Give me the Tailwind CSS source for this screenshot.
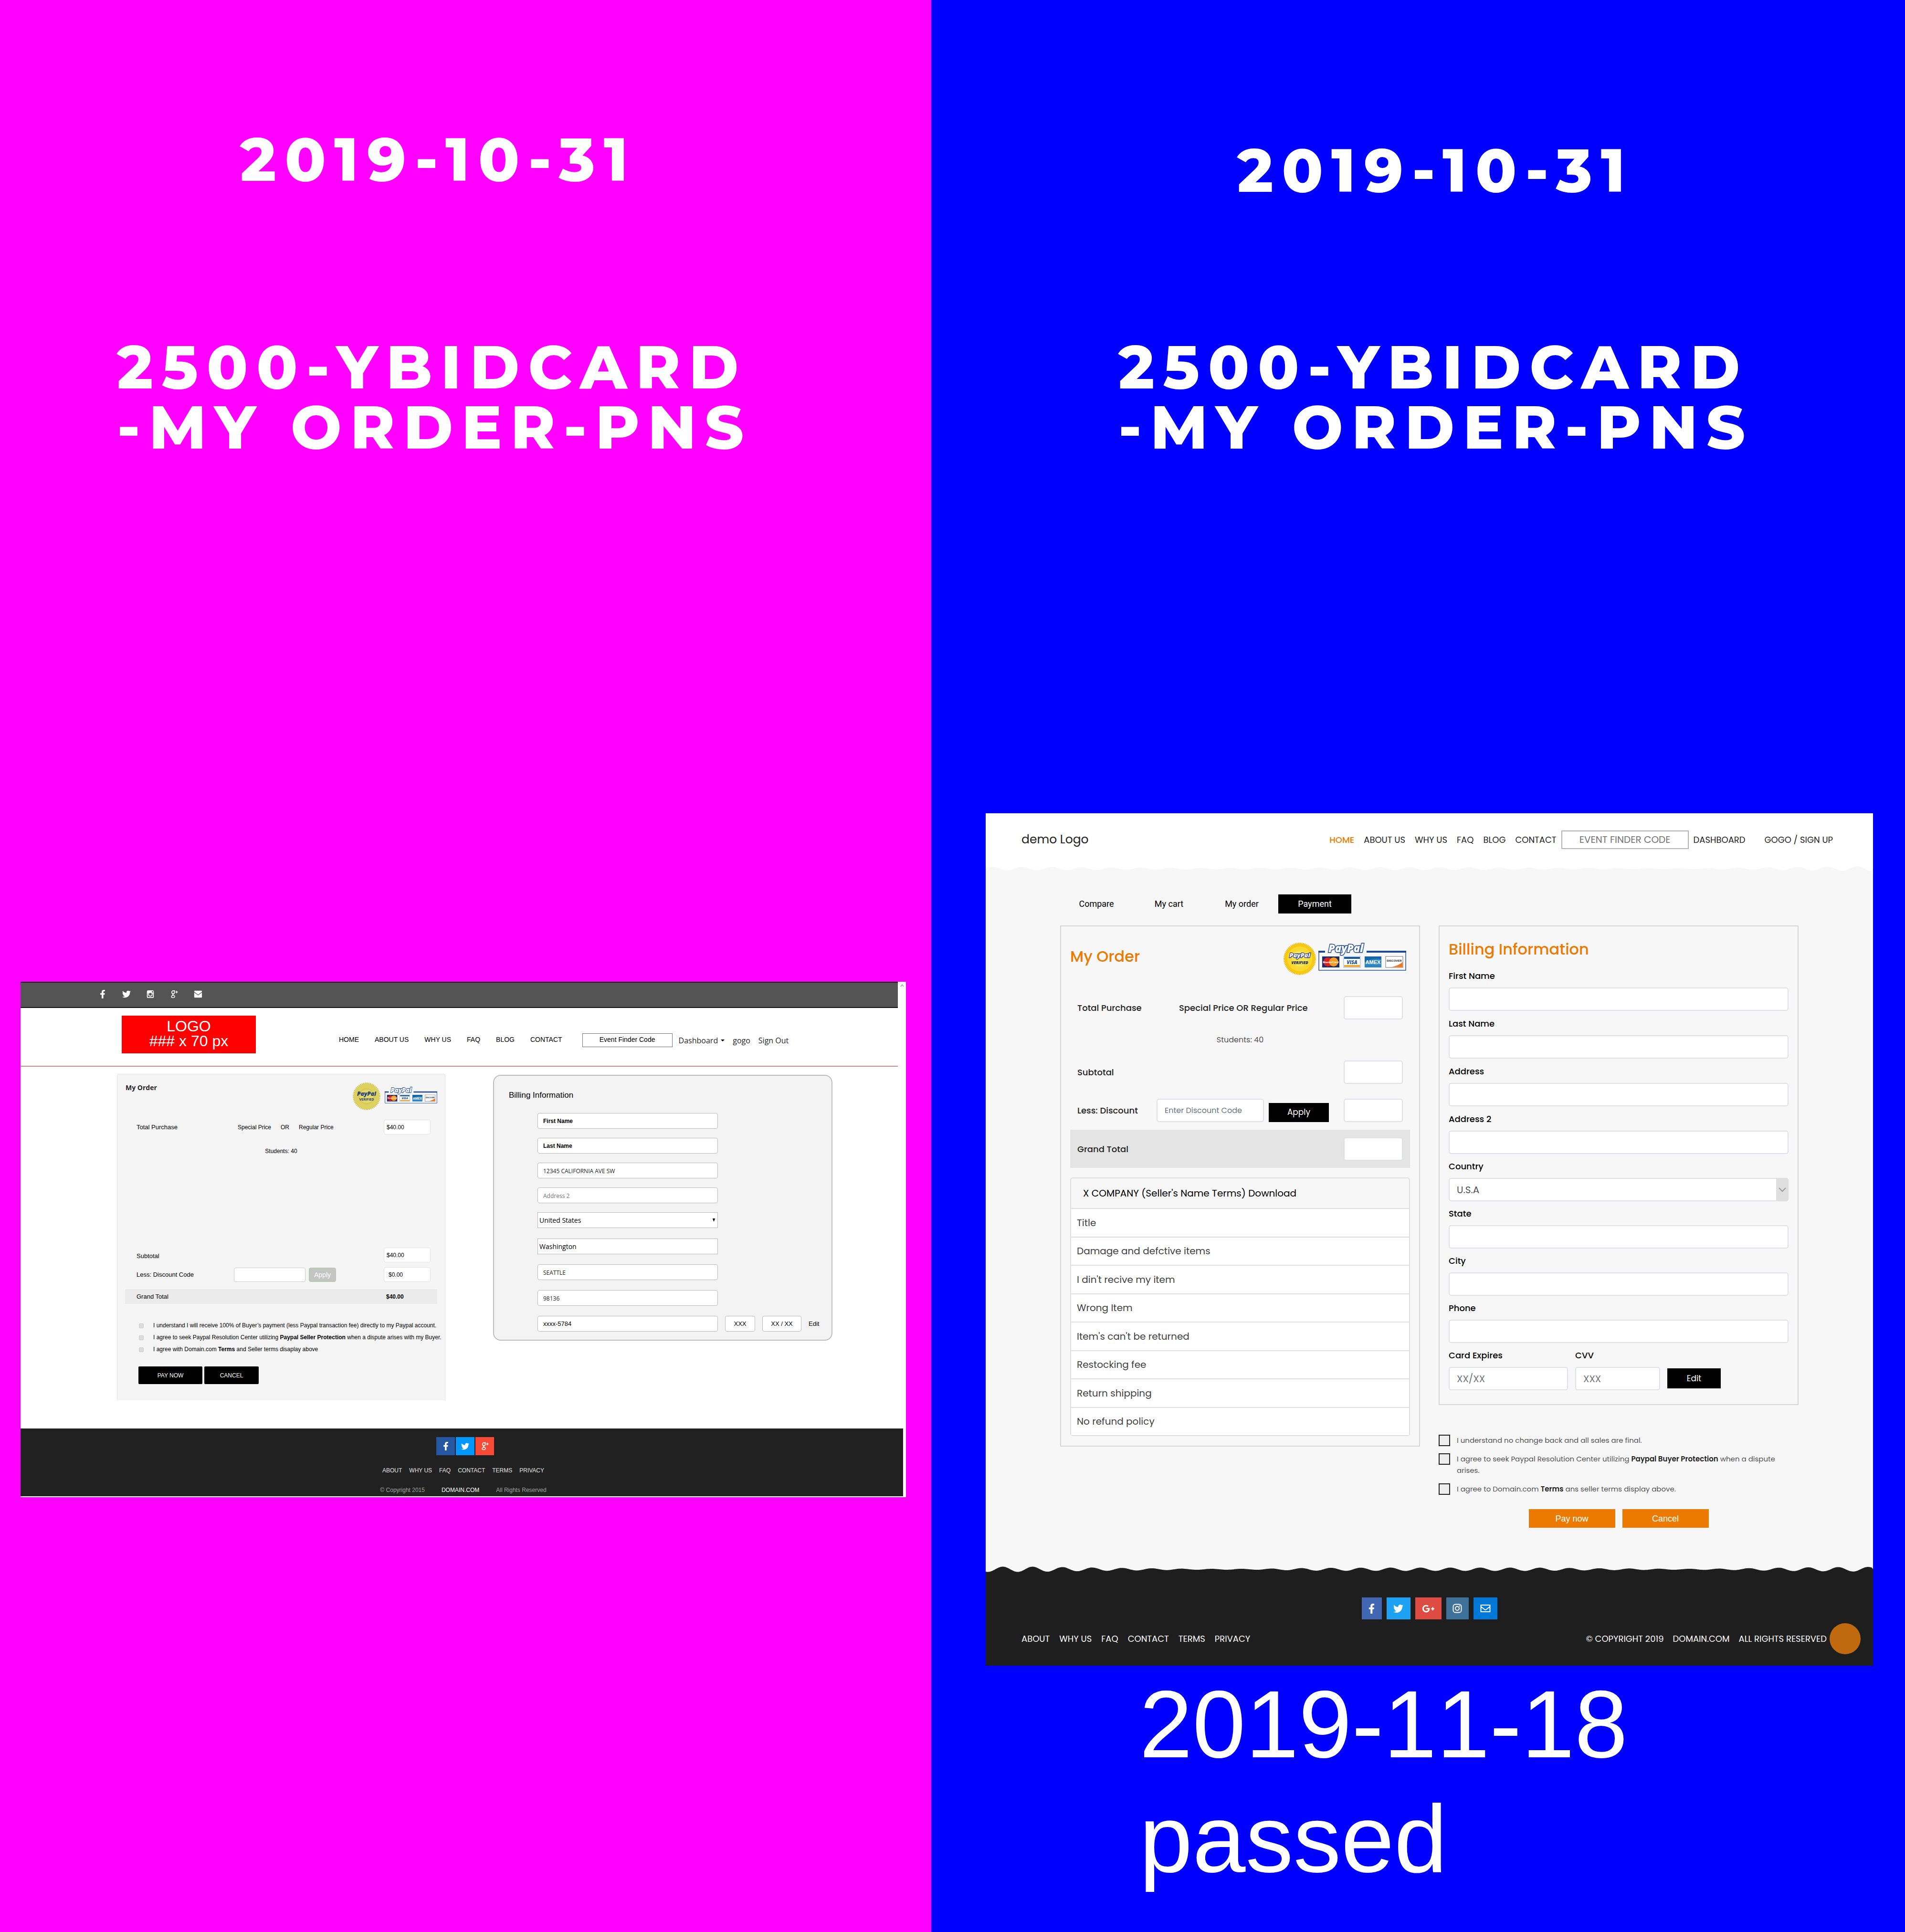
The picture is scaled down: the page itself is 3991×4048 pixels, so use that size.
<!DOCTYPE html>
<html lang="en">
<head>
<meta charset="utf-8">
<title>2500-YBIDCARD - My Order - PNS</title>
<script src="https://cdn.jsdelivr.net/npm/@tailwindcss/browser@4"></script>
</head>
<body class="bg-[#0000ff]">
<svg class="hidden" aria-hidden="true">
  <symbol id="fb" viewBox="0 0 320 512"><path fill="currentColor" d="M279.14 288l14.22-92.66h-88.91v-60.13c0-25.35 12.42-50.06 52.24-50.06h40.42V6.26S260.43 0 225.36 0c-73.22 0-121.08 44.38-121.08 124.72v70.62H22.89V288h81.39v224h100.17V288z"/></symbol>
  <symbol id="tw" viewBox="0 0 512 512"><path fill="currentColor" d="M459.37 151.716c.325 4.548.325 9.097.325 13.645 0 138.72-105.583 298.558-298.558 298.558-59.452 0-114.68-17.219-161.137-47.106 8.447.974 16.568 1.299 25.34 1.299 49.055 0 94.213-16.568 130.274-44.832-46.132-.975-84.792-31.188-98.112-72.772 6.498.974 12.995 1.624 19.818 1.624 9.421 0 18.843-1.3 27.614-3.573-48.081-9.747-84.143-51.98-84.143-102.985v-1.299c13.969 7.797 30.214 12.67 47.431 13.319-28.264-18.843-46.781-51.005-46.781-87.391 0-19.492 5.197-37.36 14.294-52.954 51.655 63.675 129.3 105.258 216.365 109.807-1.624-7.797-2.599-15.918-2.599-24.04 0-57.828 46.782-104.934 104.934-104.934 30.213 0 57.502 12.67 76.67 33.137 23.715-4.548 46.456-13.32 66.599-25.34-7.798 24.366-24.366 44.833-46.132 57.827 21.117-2.273 41.584-8.122 60.426-16.243-14.292 20.791-32.161 39.308-52.628 54.253z"/></symbol>
  <symbol id="ig-solid" viewBox="0 0 20 20"><path fill="currentColor" fill-rule="evenodd" d="M5 1h10a3 3 0 0 1 3 3v12a3 3 0 0 1-3 3H5a3 3 0 0 1-3-3V4a3 3 0 0 1 3-3zm8.500 2v3h3V3zM4 8.500V16a1 1 0 0 0 1 1h10a1 1 0 0 0 1-1V8.500h-1.500a5 5 0 1 1-9 0zM10 7a3.200 3.200 0 1 0 0 6.400A3.200 3.200 0 0 0 10 7z"/></symbol>
  <symbol id="gp-old" viewBox="0 0 20 20"><g fill="none" stroke="currentColor"><ellipse cx="7.500" cy="5.600" rx="3.200" ry="3.700" stroke-width="1.800"/><path d="M8 2h4M9 9c-3.500 0-3.500 2-1 3.200 3.500 1.600 3.500 2.400 3 4.200-1 2.600-7.500 2.600-7.500-.6 0-2.600 3-3 5-3" stroke-width="1.800"/><path d="M15.500 2v6M12.500 5h6" stroke-width="1.500"/></g></symbol>
  <symbol id="mail-solid" viewBox="0 0 20 20"><path fill="currentColor" d="M2 2h16a1 1 0 0 1 1 1v1.500L10 11 1 4.500V3a1 1 0 0 1 1-1zM1 6.200l9 6.600 9-6.600V17a1 1 0 0 1-1 1H2a1 1 0 0 1-1-1z"/></symbol>
  <symbol id="gp" viewBox="0 0 640 512"><path fill="currentColor" d="M386.061 228.496c1.834 9.692 3.143 19.384 3.143 31.956C389.204 370.205 315.599 448 204.8 448c-106.084 0-192-85.915-192-192s85.916-192 192-192c51.864 0 95.083 18.859 128.611 50.292l-52.126 50.03c-14.145-13.621-39.028-29.599-76.485-29.599-65.484 0-118.92 54.221-118.92 121.277 0 67.056 53.436 121.277 118.92 121.277 75.961 0 104.513-54.745 108.965-82.773H204.8v-66.009h181.261zm185.406 6.437V179.2h-56.001v55.733h-55.733v56.001h55.733v55.733h56.001v-55.733H627.2v-56.001h-55.733z"/></symbol>
  <symbol id="ig" viewBox="0 0 20 20"><g fill="none" stroke="currentColor" stroke-width="1.900"><rect x="1.500" y="1.500" width="17" height="17" rx="4.500"/><circle cx="10" cy="10" r="4"/></g><circle cx="15" cy="5" r="1.200" fill="currentColor"/></symbol>
  <symbol id="mail" viewBox="0 0 22 18"><path fill="none" stroke="currentColor" stroke-width="2" d="M1.500 2h19v14h-19zM2 5.500l7.500 6q1.500 1 3 0l7.500-6"/></symbol>
  <symbol id="cards" viewBox="0 -10 184 70">
    <path d="M1 10v39h182V10" fill="none" stroke="#2b5797" stroke-width="1.500"/>
    <path d="M0 8h14v4H0zM101 8h83v4h-83z" fill="#1f4a8f"/>
    <text x="21" y="11" font-family="Open Sans, sans-serif" font-weight="800" font-style="italic" font-size="22" fill="#fff" stroke="#1f4a8f" stroke-width="3" paint-order="stroke">PayPal</text>
    <rect x="8" y="20" width="36" height="23" fill="#1c2b6b"/><circle cx="20" cy="31.500" r="9.500" fill="#d9201c"/><circle cx="32" cy="31.500" r="9.500" fill="#f79b1c"/>
    <text x="26" y="34" text-anchor="middle" font-family="Liberation Sans, sans-serif" font-weight="700" font-size="6" fill="#fff">MasterCard</text>
    <rect x="53" y="20" width="35" height="23" fill="#fff" stroke="#8fb2d8" stroke-width="1"/><path d="M54 21h33v4H54z" fill="#14539a"/><path d="M54 38h33v4H54z" fill="#f4a62a"/>
    <text x="70.500" y="35.500" text-anchor="middle" font-family="Open Sans, sans-serif" font-weight="800" font-style="italic" font-size="10" fill="#14539a">VISA</text>
    <rect x="97" y="20" width="35" height="23" fill="#2c86c6"/><path d="M97 20h35v6q-18-4-35 6z" fill="#1566a8"/>
    <text x="114.500" y="36" text-anchor="middle" font-family="Liberation Sans, sans-serif" font-weight="700" font-size="11" fill="#fff">AMEX</text>
    <rect x="141" y="20" width="36" height="23" fill="#fff" stroke="#777" stroke-width="1"/><path d="M152 42.500q16-3 24.500-11v11z" fill="#ee7a22"/>
    <text x="159" y="31" text-anchor="middle" font-family="Liberation Sans, sans-serif" font-weight="700" font-size="6" fill="#222">DISCOVER</text>
  </symbol>
</svg>

<main class="grid min-h-screen grid-cols-[1951fr_2040fr] text-black">

<!-- Previous design -->
<section class="bg-[#ff00ff] pt-[271px]">
  <header class="font-['Montserrat','Inter',sans-serif] text-[126px] leading-[126px] font-extrabold tracking-[18px] text-white">
    <p class="pl-[503px]">2019-10-31</p>
    <h1 class="mt-[309px] pl-[245px]">2500-YBIDCARD<br>-MY ORDER-PNS</h1>
  </header>

  <article class="mt-[1099px] mr-[53px] ml-[43px] bg-white pb-[2px] font-['Liberation_Sans',Arial,sans-serif]">
    <div class="flex">
      <div class="flex h-[55px] flex-1 items-center gap-[30px] border-y-2 border-[#161616] bg-[#545454] pb-1 pl-[162px] text-white">
        <a href="#" aria-label="Facebook"><svg class="h-[18px] w-5"><use href="#fb"/></svg></a>
        <a href="#" aria-label="Twitter"><svg class="h-[18px] w-5"><use href="#tw"/></svg></a>
        <a href="#" aria-label="Instagram"><svg class="h-[18px] w-5"><use href="#ig-solid"/></svg></a>
        <a href="#" aria-label="Google Plus"><svg class="h-[18px] w-5"><use href="#gp-old"/></svg></a>
        <a href="#" aria-label="Mail"><svg class="h-[18px] w-5"><use href="#mail-solid"/></svg></a>
      </div>
      <svg class="h-[18px] w-[17px] text-gray-400" viewBox="0 0 17 18"><path d="M6 10l3-4 3 4" fill="none" stroke="currentColor" stroke-width="1.500"/></svg>
    </div>

    <div class="mr-[17px] flex h-[123px] items-start border-b-2 border-[#c98c8c] pt-4 pl-[212px] text-sm">
      <div class="h-[79px] w-[281px] bg-[#ff0000] pt-[7px] text-center text-[32px] leading-[31px] text-white">LOGO<br>### x 70 px</div>
      <nav class="mt-[35px] ml-[174px] flex h-[30px] items-center gap-[33px]">
        <a href="#">HOME</a><a href="#">ABOUT US</a><a href="#">WHY US</a><a href="#">FAQ</a><a href="#">BLOG</a><a href="#">CONTACT</a>
      </nav>
      <input aria-label="Event Finder Code" placeholder="Event Finder Code" class="mt-[37px] ml-[42px] h-[29px] w-[189px] border border-neutral-500 pb-[3px] text-center text-sm placeholder:text-black">
      <nav class="mt-[37px] ml-[13px] flex h-[30px] items-center gap-[17px] font-['Open_Sans',sans-serif] text-base text-neutral-800">
        <a href="#" class="flex items-center gap-[6px]">Dashboard<svg class="size-2" viewBox="0 0 8 8"><path d="M0 2h8L4 6z"/></svg></a><a href="#">gogo</a><a href="#">Sign Out</a>
      </nav>
    </div>

    <div class="grid grid-cols-[688fr_711fr] items-start gap-[100px] pt-[15px] pr-[154px] pb-[59px] pl-[202px]">
      <form class="rounded-t-[4px] border border-b-0 border-[#e3e3e3] bg-[#f5f5f5] pb-[34px] text-[13px]">
        <div class="flex justify-between pt-4 pr-4 pl-[17px]">
          <h2 class="font-['Open_Sans',sans-serif] text-sm leading-6 font-bold text-neutral-800">My Order</h2>
          <div class="flex items-center gap-[8px]">
            <svg class="size-[60px]" viewBox="0 0 60 60"><circle cx="30" cy="30" r="27" fill="#ddd160"/><circle cx="30" cy="30" r="27.500" fill="none" stroke="#d3c552" stroke-width="3" stroke-dasharray="2 1.600"/><circle cx="30" cy="30" r="17" fill="#d6ca58"/><circle cx="30" cy="30" r="14" fill="#e2d86c"/><text x="30" y="29" text-anchor="middle" font-family="Open Sans, sans-serif" font-weight="800" font-style="italic" font-size="12" fill="#1f3a78">PayPal</text><text x="30" y="39" text-anchor="middle" font-family="Open Sans, sans-serif" font-weight="700" font-size="7" fill="#28406f">VERIFIED</text></svg>
            <svg class="h-[42px] w-[110px]"><use href="#cards"/></svg>
          </div>
        </div>
        <div class="mt-[19px] grid h-[31px] grid-cols-[204px_1fr_98px] items-center pr-[30px] pl-10">
          <label for="l-total">Total Purchase</label>
          <div class="flex gap-5 pl-2 text-xs"><span>Special Price</span><span>OR</span><span>Regular Price</span></div>
          <input id="l-total" value="$40.00" class="h-[31px] w-full rounded-[4px] border border-[#e3e3e3] bg-white pl-[5px] text-xs">
        </div>
        <p class="mt-[25px] text-center text-xs leading-5">Students: 40</p>
        <div class="mt-[192px] grid h-[31px] grid-cols-[204px_1fr_98px] items-center pr-[30px] pl-10">
          <label for="l-sub" class="col-span-2 pt-1">Subtotal</label>
          <input id="l-sub" value="$40.00" class="h-[31px] w-full rounded-[4px] border border-[#e3e3e3] bg-white pl-[5px] text-xs">
        </div>
        <div class="mt-[10px] grid h-[31px] grid-cols-[204px_1fr_98px] items-center pr-[30px] pl-10">
          <label for="l-code">Less: Discount Code</label>
          <div class="flex gap-[7px]">
            <input id="l-code" class="h-[30px] w-[150px] rounded-[4px] border border-[#ccc] bg-white">
            <button type="button" class="h-[30px] w-[57px] rounded-[4px] border border-[#a9d39a] bg-[#c4c4c4] text-sm text-white">Apply</button>
          </div>
          <input aria-label="Discount" value="$0.00" class="h-[31px] w-full rounded-[4px] border border-[#e3e3e3] bg-white pl-[9px] text-xs">
        </div>
        <div class="mx-[16px] mt-[15px] grid h-[31px] grid-cols-[1fr_107px] items-center bg-[#ebebeb] pl-6">
          <span>Grand Total</span><strong class="text-xs">$40.00</strong>
        </div>
        <div class="mt-[33px] pl-[45px] text-xs leading-[25px]">
          <label class="flex items-center gap-5 whitespace-nowrap"><input type="checkbox" class="size-[10px] appearance-none rounded-[2px] border border-[#ccc] bg-[#dcdcdc]"><span>I understand I will receive 100% of Buyer’s payment (less Paypal transaction fee) directly to my Paypal account.</span></label>
          <label class="flex items-center gap-5 whitespace-nowrap"><input type="checkbox" class="size-[10px] appearance-none rounded-[2px] border border-[#ccc] bg-[#dcdcdc]"><span>I agree to seek Paypal Resolution Center utilizing <b>Paypal Seller Protection</b> when a dispute arises with my Buyer.</span></label>
          <label class="flex items-center gap-5 whitespace-nowrap"><input type="checkbox" class="size-[10px] appearance-none rounded-[2px] border border-[#ccc] bg-[#dcdcdc]"><span>I agree with Domain.com <b>Terms</b> and Seller terms disaplay above</span></label>
        </div>
        <div class="mt-[23px] flex gap-[4px] pl-11 text-xs text-white">
          <button type="button" class="h-[37px] w-[134px] rounded-[2px] bg-black">PAY NOW</button>
          <button type="button" class="h-[37px] w-[114px] rounded-[2px] bg-black">CANCEL</button>
        </div>
      </form>

      <form class="mt-[2px] rounded-[16px] border-2 border-[#bdbdbd] bg-[#f3f3f3] pt-[29px] pb-[17px] font-['Open_Sans',sans-serif] text-xs text-neutral-800">
        <h2 class="pl-[31px] font-['Liberation_Sans',Arial,sans-serif] text-[17px] leading-6 text-black">Billing Information</h2>
        <div class="mt-[25px] flex flex-col gap-[19px] pl-[91px]">
          <input aria-label="First Name" placeholder="First Name" class="h-[33px] w-[378px] rounded-[4px] border border-[#bbb] bg-white px-[11px] font-['Liberation_Sans',Arial,sans-serif] font-bold placeholder:text-black">
          <input aria-label="Last Name" placeholder="Last Name" class="h-[33px] w-[378px] rounded-[4px] border border-[#bbb] bg-white px-[11px] font-['Liberation_Sans',Arial,sans-serif] font-bold placeholder:text-black">
          <input aria-label="Address" value="12345 CALIFORNIA AVE SW" class="h-[33px] w-[378px] rounded-[4px] border border-[#bbb] bg-white px-[11px] pt-[2px]">
          <input aria-label="Address 2" placeholder="Address 2" class="h-[33px] w-[378px] rounded-[4px] border border-[#bbb] bg-white px-[11px] pt-[2px] placeholder:text-neutral-500">
          <div class="relative w-[378px]">
            <select aria-label="Country" class="h-[33px] w-full appearance-none border border-[#bbb] bg-white px-[3px] text-sm text-black"><option>United States</option></select>
            <svg class="pointer-events-none absolute top-[13px] right-[5px] size-[7px]" viewBox="0 0 8 8"><path d="M1 0h6L4 8z"/></svg>
          </div>
        </div>
        <div class="mt-[22px] flex flex-col gap-[21px] pl-[91px]">
          <select aria-label="State" class="h-[33px] w-[378px] appearance-none border border-[#bbb] bg-white px-[3px] text-sm text-black"><option>Washington</option></select>
          <input aria-label="City" value="SEATTLE" class="h-[33px] w-[378px] rounded-[4px] border border-[#bbb] bg-white px-[11px] pt-[2px]">
          <input aria-label="Zip" value="98136" class="h-[33px] w-[378px] rounded-[4px] border border-[#bbb] bg-white px-[11px] pt-[2px]">
          <div class="flex items-center gap-[15px] font-['Liberation_Sans',Arial,sans-serif] text-[13px] text-black">
            <input aria-label="Card" value="xxxx-5784" class="h-[33px] w-[378px] rounded-[4px] border border-[#bbb] bg-white px-[11px]">
            <input aria-label="CVV" value="XXX" class="h-[33px] w-[63px] rounded-[4px] border border-[#bbb] bg-white text-center">
            <input aria-label="Expiry" value="XX / XX" class="h-[33px] w-[82px] rounded-[4px] border border-[#bbb] bg-white text-center">
            <button type="button">Edit</button>
          </div>
        </div>
      </form>
    </div>

    <footer class="mr-[6px] flex flex-col items-center bg-[#212121] pt-[18px] pb-[5px] pl-[6px] text-xs leading-4 text-neutral-200">
      <div class="flex gap-[2px] pl-2 text-white">
        <a href="#" aria-label="Facebook" class="flex h-[38px] w-[39px] items-center justify-center bg-[#2558a0]"><svg class="size-[18px]"><use href="#fb"/></svg></a>
        <a href="#" aria-label="Twitter" class="flex h-[38px] w-[39px] items-center justify-center bg-[#0098ff]"><svg class="size-[17px]"><use href="#tw"/></svg></a>
        <a href="#" aria-label="Google Plus" class="flex h-[38px] w-[39px] items-center justify-center bg-[#f84b37]"><svg class="size-[18px]"><use href="#gp-old"/></svg></a>
      </div>
      <nav class="mt-6 flex gap-[15px]"><a href="#">ABOUT</a><a href="#">WHY US</a><a href="#">FAQ</a><a href="#">CONTACT</a><a href="#">TERMS</a><a href="#">PRIVACY</a></nav>
      <p class="mt-[25px] flex gap-[35px] text-neutral-400"><span>© Copyright 2015</span><a href="#" class="text-white">DOMAIN.COM</a><span>All Rights Reserved</span></p>
    </footer>
  </article>
</section>

<!-- New design -->
<section class="bg-[#0000ff] pt-[294px]">
  <header class="font-['Montserrat','Inter',sans-serif] text-[126px] leading-[126px] font-extrabold tracking-[18px] text-white">
    <p class="pl-[641px]">2019-10-31</p>
    <h1 class="mt-[286px] pl-[392px]">2500-YBIDCARD<br>-MY ORDER-PNS</h1>
  </header>

  <article class="mt-[746px] mr-[67px] ml-[114px] bg-[#f7f7f7] font-['Poppins','Inter',sans-serif] text-[18px] text-[#222]">
    <div class="flex h-[110px] items-center bg-white pr-[84px] pl-[75px]">
      <a href="#" class="mr-auto text-[25px]">demo Logo</a>
      <nav class="flex items-center gap-5">
        <a href="#" class="font-medium text-[#ed7a00]">HOME</a><a href="#">ABOUT US</a><a href="#">WHY US</a><a href="#">FAQ</a><a href="#">BLOG</a><a href="#">CONTACT</a>
      </nav>
      <input aria-label="Event finder code" placeholder="EVENT FINDER CODE" class="mx-[10px] h-[39px] w-[267px] border-2 border-[#b4b4b4] text-center text-xl placeholder:text-neutral-500">
      <nav class="flex gap-10"><a href="#">DASHBOARD</a><a href="#">GOGO / SIGN UP</a></nav>
    </div>
    <svg class="block h-3 w-full bg-white" viewBox="0 0 1859 12" preserveAspectRatio="none"><path data-wave="0:4,200:3,450:1.5,620:1.5,800:3,1000:3,1200:1.7,1360:1,1500:1,1650:3,1859:5.5" data-mid="6" data-base="12" data-period="62.500" data-phase="-2.900" fill="#f7f7f7"/></svg>

    <div class="px-[156px]">
      <nav class="flex pt-12 font-['Roboto',sans-serif] text-lg text-black">
        <a href="#" class="flex h-10 w-[152px] items-center justify-center">Compare</a>
        <a href="#" class="flex h-10 w-[152px] items-center justify-center">My cart</a>
        <a href="#" class="flex h-10 w-[153px] items-center justify-center">My order</a>
        <a href="#" class="flex h-10 w-[153px] items-center justify-center bg-black text-white">Payment</a>
      </nav>

      <div class="mt-[25px] grid grid-cols-2 items-start gap-[39px]">
        <form class="border-2 border-[#d6d6d6] px-[19px] pb-5 font-medium">
          <div class="flex items-start justify-between pt-[33px] pr-2">
            <h2 class="text-[32px] leading-[60px] font-medium text-[#ed7a00]">My Order</h2>
            <div class="flex items-center gap-[4px]">
              <svg class="size-[70px]" viewBox="0 0 70 70"><circle cx="35" cy="35" r="32" fill="#f6c913"/><circle cx="35" cy="35" r="32.500" fill="none" stroke="#f2bb0c" stroke-width="3" stroke-dasharray="2 1.400"/><circle cx="35" cy="35" r="26" fill="#fbd92c"/><circle cx="35" cy="35" r="20" fill="#f5dc3e"/><circle cx="35" cy="35" r="16" fill="#fae552"/><text x="35" y="32" text-anchor="middle" font-family="Open Sans, sans-serif" font-weight="800" font-style="italic" font-size="13" fill="#fff" stroke="#1d2f8a" stroke-width="2.500" paint-order="stroke">PayPal</text><text x="35" y="46" text-anchor="middle" font-family="Open Sans, sans-serif" font-weight="800" font-style="italic" font-size="8" fill="#1c2a50">VERIFIED</text></svg>
              <svg class="h-[70px] w-[184px]"><use href="#cards"/></svg>
            </div>
          </div>
          <div class="mt-[42px] grid h-[50px] grid-cols-[166px_1fr_124px] items-center px-[15px]">
            <label for="r-total">Total Purchase</label><span class="pl-[47px]">Special Price OR Regular Price</span>
            <input id="r-total" class="h-[49px] w-full rounded-[5px] border-2 border-[#dee2e6] bg-white">
          </div>
          <p class="mt-[31px] text-center text-base leading-6 font-normal text-neutral-600">Students: 40</p>
          <div class="mt-[31px] grid h-[49px] grid-cols-[166px_1fr_124px] items-center px-[15px]">
            <label for="r-sub" class="col-span-2">Subtotal</label>
            <input id="r-sub" class="h-[49px] w-full rounded-[5px] border-2 border-[#dee2e6] bg-white">
          </div>
          <div class="mt-[31px] grid h-[49px] grid-cols-[166px_1fr_124px] items-center px-[15px]">
            <label for="r-code">Less: Discount</label>
            <div class="flex items-end gap-[10px]">
              <input id="r-code" placeholder="Enter Discount Code" class="h-[49px] w-[225px] rounded-[5px] border-2 border-[#dee2e6] bg-white pl-[15px] text-base font-normal placeholder:text-[#6c757d]">
              <button type="button" class="h-10 w-[126px] bg-black text-[17px] font-normal text-white">Apply</button>
            </div>
            <input aria-label="Discount" class="h-[49px] w-full rounded-[5px] border-2 border-[#dee2e6] bg-white">
          </div>
          <div class="mt-4 grid h-20 grid-cols-[1fr_124px] items-center bg-[#e4e4e4] px-[15px]">
            <label for="r-grand">Grand Total</label>
            <input id="r-grand" class="h-[49px] w-full rounded-[5px] border-2 border-[#dee2e6] bg-white">
          </div>
          <div class="mt-5 rounded-[5px] border-2 border-[#dfdfdf] text-xl font-normal">
            <h3 class="h-[62px] pl-[25px] leading-[62px] text-black">X COMPANY (Seller's Name Terms) Download</h3>
            <ul class="grid h-[476px] auto-rows-fr text-neutral-700">
              <li class="flex items-center border-t-2 border-[#dfdfdf] bg-white pl-3">Title</li>
              <li class="flex items-center border-t-2 border-[#dfdfdf] bg-white pl-3">Damage and defctive items</li>
              <li class="flex items-center border-t-2 border-[#dfdfdf] bg-white pl-3">I din't recive my item</li>
              <li class="flex items-center border-t-2 border-[#dfdfdf] bg-white pl-3">Wrong Item</li>
              <li class="flex items-center border-t-2 border-[#dfdfdf] bg-white pl-3">Item's can't be returned</li>
              <li class="flex items-center border-t-2 border-[#dfdfdf] bg-white pl-3">Restocking fee</li>
              <li class="flex items-center border-t-2 border-[#dfdfdf] bg-white pl-3">Return shipping</li>
              <li class="flex items-center border-t-2 border-[#dfdfdf] bg-white pl-3">No refund policy</li>
            </ul>
          </div>
        </form>

        <form>
          <div class="border-2 border-[#d6d6d6] px-[19px] pt-6 pb-[29px] leading-6 font-medium text-black">
            <h2 class="text-[32px] leading-[48px] font-medium text-[#ed7a00]">Billing Information</h2>
            <div class="mt-5 flex flex-col gap-[15px]">
              <label>First Name<input class="mt-3 block h-[49px] w-full rounded-[5px] border-2 border-[#dee2e6] bg-white"></label>
              <label>Last Name<input class="mt-3 block h-[49px] w-full rounded-[5px] border-2 border-[#dee2e6] bg-white"></label>
              <label>Address<input class="mt-3 block h-[49px] w-full rounded-[5px] border-2 border-[#dee2e6] bg-white"></label>
              <label>Address 2<input class="mt-3 block h-[49px] w-full rounded-[5px] border-2 border-[#dee2e6] bg-white"></label>
            </div>
            <div class="mt-[14px] flex flex-col gap-[14px]">
              <label class="relative">Country
                <select class="mt-3 block h-[49px] w-full appearance-none rounded-[5px] border-2 border-[#dee2e6] bg-white pl-[15px] text-xl leading-6 font-normal text-neutral-600"><option>U.S.A</option></select>
                <span class="pointer-events-none absolute right-0 bottom-0 flex h-[49px] w-[26px] items-center justify-center rounded-r-[5px] bg-[#dfdfdf]"><svg class="h-[10px] w-4" viewBox="0 0 16 10"><path d="M1 1l7 7 7-7" fill="none" stroke="#999" stroke-width="2"/></svg></span>
              </label>
              <label>State<input class="mt-3 block h-[49px] w-full rounded-[5px] border-2 border-[#dee2e6] bg-white"></label>
              <label>City<input class="mt-3 block h-[49px] w-full rounded-[5px] border-2 border-[#dee2e6] bg-white"></label>
              <label>Phone<input class="mt-3 block h-[49px] w-full rounded-[5px] border-2 border-[#dee2e6] bg-white"></label>
              <div class="flex items-end gap-[15px]">
                <label>Card Expires<input placeholder="XX/XX" class="mt-3 block h-[49px] w-[250px] rounded-[5px] border-2 border-[#dee2e6] bg-white pl-[15px] text-xl leading-6 font-normal placeholder:text-[#6c757d]"></label>
                <label>CVV<input placeholder="XXX" class="mt-3 block h-[49px] w-[178px] rounded-[5px] border-2 border-[#dee2e6] bg-white pl-[15px] text-xl leading-6 font-normal placeholder:text-[#6c757d]"></label>
                <button type="button" class="mb-1 h-[42px] w-[112px] bg-black text-[17px] font-normal text-white">Edit</button>
              </div>
            </div>
          </div>
          <div class="mt-[62px] flex flex-col gap-[15px] text-[15px] leading-6 text-neutral-600">
            <label class="flex gap-[14px]"><input type="checkbox" class="size-6 shrink-0 appearance-none border-2 border-[#222] bg-[#eee]"><span>I understand no change back and all sales are final.</span></label>
            <label class="flex gap-[14px]"><input type="checkbox" class="size-6 shrink-0 appearance-none border-2 border-[#222] bg-[#eee]"><span>I agree to seek Paypal Resolution Center utilizing <b class="font-semibold text-[#222]">Paypal Buyer Protection</b> when a dispute<br>arises.</span></label>
            <label class="flex gap-[14px]"><input type="checkbox" class="size-6 shrink-0 appearance-none border-2 border-[#222] bg-[#eee]"><span>I agree to Domain.com <b class="font-semibold text-[#222]">Terms</b> ans seller terms display above.</span></label>
          </div>
          <div class="mt-[30px] flex justify-center gap-[15px] font-['Liberation_Sans',Arial,sans-serif] text-lg text-white">
            <button type="button" class="h-[39px] w-[181px] bg-[#ed7a00]">Pay now</button>
            <button type="button" class="h-[39px] w-[181px] bg-[#ed7a00]">Cancel</button>
          </div>
        </form>
      </div>
    </div>

    <svg class="mt-[79px] block h-4 w-full" viewBox="0 0 1859 16" preserveAspectRatio="none"><path data-wave="0:5.5,100:5.5,200:4,350:2,450:1,560:1,700:3,850:3.5,1150:3.5,1300:2,1450:1,1550:1.500,1700:4,1859:5" data-mid="8" data-base="16" data-period="62.500" data-phase="1.100" fill="#1f1e1e"/></svg>
    <footer class="bg-[#1f1e1e] pt-[51px] pb-[24px] text-white">
      <div class="flex justify-center gap-[10px]">
        <a href="#" aria-label="Facebook" class="flex h-[46px] w-[42px] items-center justify-center bg-[#4267b2]"><svg class="size-[21px]"><use href="#fb"/></svg></a>
        <a href="#" aria-label="Twitter" class="flex h-[46px] w-[50px] items-center justify-center bg-[#1da1f2]"><svg class="size-[21px]"><use href="#tw"/></svg></a>
        <a href="#" aria-label="Google Plus" class="flex h-[46px] w-[55px] items-center justify-center bg-[#dd4b43]"><svg class="h-[21px] w-[27px]"><use href="#gp"/></svg></a>
        <a href="#" aria-label="Instagram" class="flex h-[46px] w-[47px] items-center justify-center bg-[#3f729b]"><svg class="size-5"><use href="#ig"/></svg></a>
        <a href="#" aria-label="Mail" class="flex h-[46px] w-[50px] items-center justify-center bg-[#0078d7]"><svg class="h-[18px] w-[22px]"><use href="#mail"/></svg></a>
      </div>
      <div class="mt-2 flex h-[65px] items-center pr-[26px] pl-[75px]">
        <nav class="mr-auto flex gap-5"><a href="#">ABOUT</a><a href="#">WHY US</a><a href="#">FAQ</a><a href="#">CONTACT</a><a href="#">TERMS</a><a href="#">PRIVACY</a></nav>
        <p class="flex gap-[19px]"><span>© COPYRIGHT 2019</span><a href="#">DOMAIN.COM</a><span>ALL RIGHTS RESERVED</span></p>
        <button type="button" aria-label="Back to top" class="ml-[6px] size-[65px] rounded-full bg-[#c0690f]"></button>
      </div>
    </footer>
  </article>

  <p class="mt-[3px] pl-[436px] font-['Liberation_Sans',Arial,sans-serif] text-[200px] leading-[240px] text-white [font-kerning:none]">2019-11-18<br>passed</p>
</section>
</main>

<script>
// Wavy section edges: amplitude is interpolated between the x:amplitude stops.
document.querySelectorAll('[data-wave]').forEach(function (p) {
  var stops = p.dataset.wave.split(',').map(function (s) { return s.split(':').map(Number); });
  var mid = +p.dataset.mid, base = p.dataset.base, period = +p.dataset.period, phase = +p.dataset.phase;
  var d = 'M0 ' + base, i = 0;
  for (var x = 0; x <= 1859; x += 3) {
    while (i < stops.length - 2 && x > stops[i + 1][0]) i++;
    var a = stops[i], b = stops[i + 1];
    var amp = a[1] + (b[1] - a[1]) * (x - a[0]) / (b[0] - a[0]);
    d += 'L' + x + ' ' + (mid + amp * Math.sin(x / period * 2 * Math.PI + phase)).toFixed(2);
  }
  p.setAttribute('d', d + 'L1859 ' + mid + 'L1859 ' + base + 'Z');
});
</script>
</body>
</html>
